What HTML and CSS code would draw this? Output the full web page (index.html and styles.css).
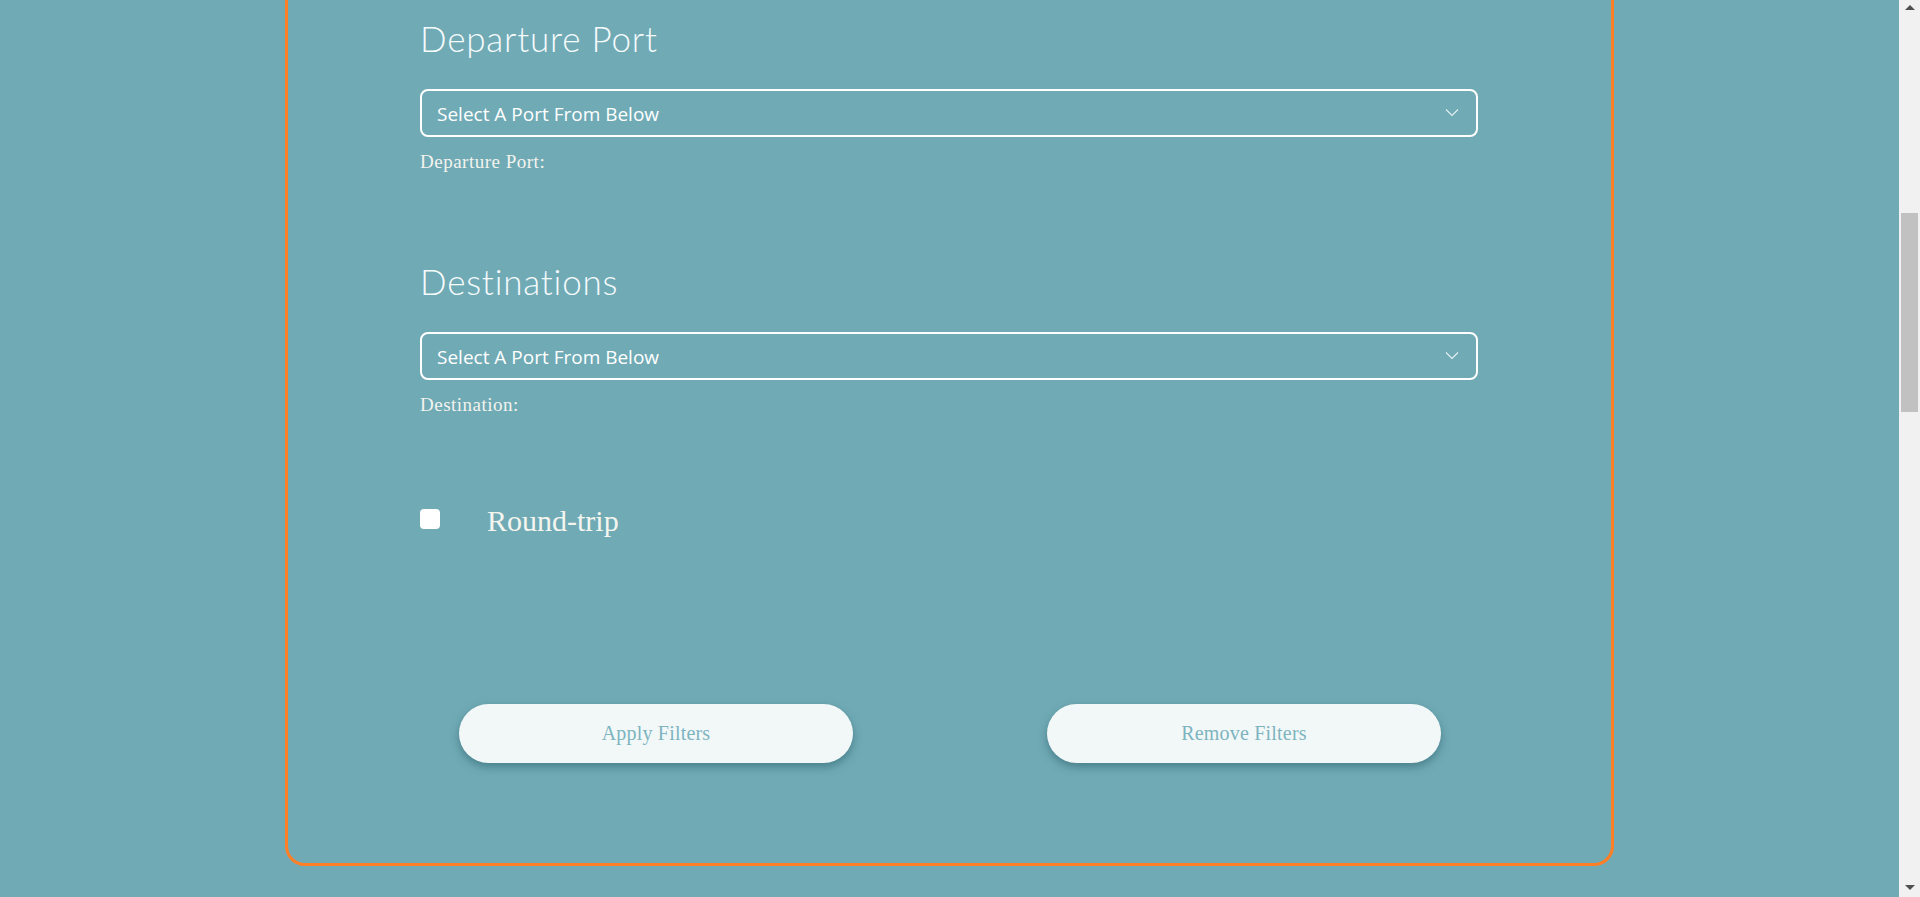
FILE: index.html
```html
<!DOCTYPE html>
<html lang="en">
<head>
<meta charset="utf-8">
<title>Cruise Filters</title>
<link rel="stylesheet" href="styles.css">
</head>
<body>
<div class="page">
  <main class="viewport">
    <form class="card">
      <div class="content">
        <section class="field">
          <h2 class="field-title">Departure Port</h2>
          <div class="select-wrap">
            <select class="select">
              <option>Select A Port From Below</option>
            </select>
            <svg class="chevron" width="14" height="9" viewBox="0 0 14 9"><path d="M1 1.5 L7 7.5 L13 1.5" fill="none" stroke="#e6f1f3" stroke-width="1.1"/></svg>
          </div>
          <div class="field-label">Departure Port:</div>
        </section>
        <section class="field field-second">
          <h2 class="field-title">Destinations</h2>
          <div class="select-wrap">
            <select class="select">
              <option>Select A Port From Below</option>
            </select>
            <svg class="chevron" width="14" height="9" viewBox="0 0 14 9"><path d="M1 1.5 L7 7.5 L13 1.5" fill="none" stroke="#e6f1f3" stroke-width="1.1"/></svg>
          </div>
          <div class="field-label">Destination:</div>
        </section>
        <label class="check-row">
          <span class="checkbox"></span>
          <span class="check-text">Round-trip</span>
        </label>
        <div class="actions">
          <button type="button" class="pill">Apply Filters</button>
          <button type="button" class="pill">Remove Filters</button>
        </div>
      </div>
    </form>
  </main>
  <aside class="scrollbar">
    <span class="arrow arrow-up"></span>
    <span class="track"><span class="thumb"></span></span>
    <span class="arrow arrow-down"></span>
  </aside>
</div>
</body>
</html>
```
FILE: styles.css
```css
html, body {
  margin: 0;
  padding: 0;
  height: 897px;
  overflow: hidden;
  background: #70aab5;
}

.page {
  display: flex;
  height: 897px;
}

.viewport {
  flex: 1;
  min-width: 0;
}

.card {
  width: 1329px;
  margin: 0 auto;
  box-sizing: border-box;
  border: 3px solid #ff7f27;
  border-top: none;
  border-radius: 0 0 20px 20px;
  padding: 18px 0 100px;
}

.content {
  width: 1058px;
  margin: 0 133px 0 132px;
}

.field-title {
  margin: 0;
  font-family: "Lato", "Open Sans", sans-serif;
  font-weight: 300;
  font-size: 35px;
  line-height: 40px;
  letter-spacing: 0.8px;
  color: #f6fbfc;
}

.field-second {
  margin-top: 88px;
}

.select-wrap {
  position: relative;
  margin-top: 31px;
}

.select {
  display: block;
  width: 100%;
  height: 48px;
  box-sizing: border-box;
  appearance: none;
  -webkit-appearance: none;
  background: transparent;
  border: 2px solid #ffffff;
  border-radius: 8px;
  padding: 2px 40px 0 15px;
  font-family: "Open Sans", "Noto Sans", sans-serif;
  font-size: 19px;
  color: #ffffff;
  outline: none;
}

.chevron {
  position: absolute;
  right: 19px;
  top: 19px;
  pointer-events: none;
}

.field-label {
  margin-top: 14px;
  font-family: "Liberation Serif", serif;
  font-size: 19px;
  line-height: 22px;
  letter-spacing: 0.5px;
  color: #f3f3ee;
}

.check-row {
  display: flex;
  align-items: flex-start;
  gap: 47px;
  margin-top: 88px;
}

.checkbox {
  width: 20px;
  height: 20px;
  margin-top: 5px;
  background: #ffffff;
  border-radius: 4px;
  flex: none;
}

.check-text {
  font-family: "Liberation Serif", serif;
  font-size: 30px;
  line-height: 34px;
  color: #f5f5ef;
}

.actions {
  display: flex;
  justify-content: space-between;
  padding: 0 37px 0 39px;
  margin-top: 166px;
}

.pill {
  width: 394px;
  height: 59px;
  border: none;
  border-radius: 30px;
  background: #f2f8f8;
  box-shadow: 0 4px 8px rgba(40, 95, 105, 0.55);
  font-family: "Liberation Serif", serif;
  font-size: 20px;
  letter-spacing: 0.2px;
  color: #7db4bf;
  padding: 0;
}

.scrollbar {
  width: 21px;
  flex: none;
  background: #f1f1f1;
  display: flex;
  flex-direction: column;
  align-items: center;
}

.arrow {
  width: 0;
  height: 0;
  border-left: 5px solid transparent;
  border-right: 5px solid transparent;
  flex: none;
}

.arrow-up {
  border-bottom: 5px solid #505050;
  margin-top: 5px;
}

.arrow-down {
  border-top: 5px solid #505050;
  margin-bottom: 7px;
}

.track {
  flex: 1;
  align-self: stretch;
  padding: 203px 2px 0;
}

.thumb {
  display: block;
  height: 199px;
  background: #c1c1c1;
}
```
